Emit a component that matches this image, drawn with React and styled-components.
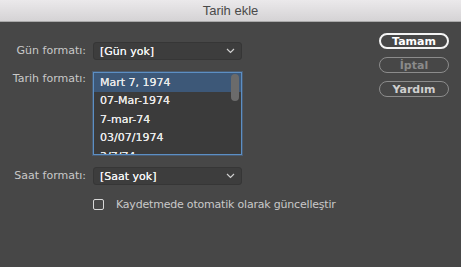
import React from 'react';
import styled, { createGlobalStyle } from 'styled-components';

const Global = createGlobalStyle`
  html, body {
    margin: 0;
    padding: 0;
    background: #474747;
  }
  body {
    font-family: "DejaVu Sans", "Liberation Sans", sans-serif;
  }
`;

const Window = styled.div`
  width: 461px;
  height: 267px;
  background: #474747;
  border-radius: 0 0 5px 5px;
  overflow: hidden;
  display: flex;
  flex-direction: column;
`;

const TitleBar = styled.div`
  height: 21px;
  flex: none;
  display: flex;
  align-items: center;
  justify-content: center;
  background: linear-gradient(#ebe9eb, #d5d3d5);
  border-bottom: 1px solid #a9a9a9;
  font-family: "Liberation Sans", Arial, sans-serif;
  font-size: 13px;
  color: #4a4a4a;
`;

const Body = styled.div`
  flex: 1;
  display: flex;
  justify-content: space-between;
  padding: 10px 12px 0 0;
`;

const Form = styled.div`
  display: grid;
  grid-template-columns: 86px 149px;
  column-gap: 7px;
  align-content: start;
  padding-top: 10px;
`;

const Label = styled.div`
  font-size: 11px;
  color: #c9c9c9;
  text-align: right;
  line-height: ${p => (p.$top ? '14px' : '18px')};
  margin-top: ${p => p.$mt || 0}px;
`;

const Select = styled.div`
  height: 18px;
  box-sizing: border-box;
  margin-top: ${p => p.$mt || 0}px;
  display: flex;
  align-items: center;
  justify-content: space-between;
  padding: 0 6px 0 6px;
  background: #3d3d3d;
  border: 1px solid #363636;
  border-radius: 3px;
  font-size: 11px;
  color: #f2f2f2;
  text-shadow: 0 0 0.4px #ffffff;
`;

const List = styled.div`
  margin-top: ${p => p.$mt || 0}px;
  height: 83px;
  box-sizing: border-box;
  border: 1px solid #5c8fc4;
  box-shadow: 0 0 0 1px rgba(80, 130, 190, 0.35);
  background: #3b3b3b;
  position: relative;
  overflow: hidden;
`;

const Row = styled.div`
  height: 18.5px;
  display: flex;
  align-items: center;
  padding-left: 6px;
  font-size: 11px;
  color: #e8e8e8;
  text-shadow: 0 0 0.4px #ffffff;
  background: ${p => (p.$selected ? '#3d5878' : 'transparent')};
`;

const Thumb = styled.div`
  position: absolute;
  top: 1px;
  right: 2px;
  width: 8px;
  height: 27px;
  border-radius: 4px;
  background: #6b6b6b;
`;

const CheckRow = styled.label`
  grid-column: 2;
  margin-top: 13px;
  display: flex;
  align-items: center;
  gap: 12px;
  white-space: nowrap;
  font-size: 11px;
  letter-spacing: -0.2px;
  color: #c9c9c9;
`;

const Box = styled.span`
  width: 11px;
  height: 11px;
  box-sizing: border-box;
  border: 1px solid #d8d8d8;
  border-radius: 2px;
  flex: none;
`;

const Buttons = styled.div`
  display: flex;
  flex-direction: column;
  gap: 8px;
  padding-top: 1px;
`;

const Button = styled.div`
  width: 70px;
  height: 16px;
  box-sizing: border-box;
  border-radius: 8px;
  border: ${p => (p.$primary ? '2px solid #f4f4f4' : '1px solid #8c8c8c')};
  display: flex;
  align-items: center;
  justify-content: center;
  font-size: 11px;
  font-weight: bold;
  color: ${p => (p.$primary ? '#ffffff' : p.$disabled ? '#8a8a8a' : '#cfcfcf')};
`;

const Chevron = () => (
  <svg width="9" height="6" viewBox="0 0 9 6">
    <path d="M1 1 L4.5 4.5 L8 1" fill="none" stroke="#cfcfcf" strokeWidth="1.2" />
  </svg>
);

const dates = ['Mart 7, 1974', '07-Mar-1974', '7-mar-74', '03/07/1974', '3/7/74'];

export default function App() {
  return (
    <Window>
      <Global />
      <TitleBar>Tarih ekle</TitleBar>
      <Body>
        <Form>
          <Label>Gün formatı:</Label>
          <Select>
            [Gün yok]
            <Chevron />
          </Select>
          <Label $top $mt={12}>Tarih formatı:</Label>
          <List $mt={12}>
            {dates.map((d, i) => (
              <Row key={d} $selected={i === 0}>
                {d}
              </Row>
            ))}
            <Thumb />
          </List>
          <Label $mt={12}>Saat formatı:</Label>
          <Select $mt={12}>
            [Saat yok]
            <Chevron />
          </Select>
          <CheckRow>
            <Box />
            Kaydetmede otomatik olarak güncelleştir
          </CheckRow>
        </Form>
        <Buttons>
          <Button $primary>Tamam</Button>
          <Button $disabled>İptal</Button>
          <Button>Yardım</Button>
        </Buttons>
      </Body>
    </Window>
  );
}
